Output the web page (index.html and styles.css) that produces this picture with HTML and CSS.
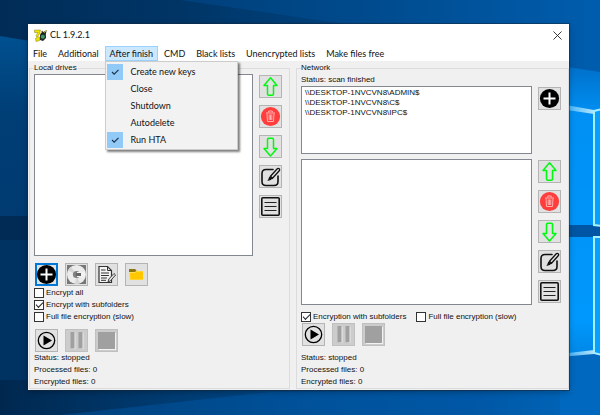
FILE: index.html
```
<!DOCTYPE html>
<html lang="en">
<head>
  <meta charset="UTF-8">
  <title>CL 1.9.2.1</title>
  <link rel="stylesheet" href="styles.css">
</head>
<body>

  <!-- desktop wallpaper -->
  <svg class="wallpaper" viewBox="0 0 600 415" preserveAspectRatio="none" aria-hidden="true">
    <defs>
      <linearGradient id="sky">
        <stop offset="0" stop-color="#012c57"/>
        <stop offset="0.3" stop-color="#003566"/>
        <stop offset="0.6" stop-color="#004480"/>
        <stop offset="1" stop-color="#0062b4"/>
      </linearGradient>
      <linearGradient id="floor">
        <stop offset="0" stop-color="#00284f"/>
        <stop offset="0.5" stop-color="#004a8c"/>
        <stop offset="0.8" stop-color="#0055a0"/>
        <stop offset="1" stop-color="#0070c8"/>
      </linearGradient>
      <linearGradient id="beam" x1="0" y1="0" x2="0" y2="1">
        <stop offset="0" stop-color="#0070ca"/>
        <stop offset="0.15" stop-color="#0090f4"/>
        <stop offset="0.8" stop-color="#0098fc"/>
        <stop offset="1" stop-color="#0078d4"/>
      </linearGradient>
      <linearGradient id="leftGlow" x1="0" y1="0" x2="0" y2="1">
        <stop offset="0" stop-color="#00508f"/>
        <stop offset="0.4" stop-color="#003e76"/>
        <stop offset="1" stop-color="#003a70"/>
      </linearGradient>
      <linearGradient id="streak">
        <stop offset="0" stop-color="#2aaeff"/>
        <stop offset="1" stop-color="#e4fbff"/>
      </linearGradient>
    </defs>
    <rect width="600" height="415" fill="url(#sky)"/>
    <path d="M180 0H600V75L400 32Z" fill="#0056a2" opacity="0.35"/>
    <path d="M0 36L60 46V230H0Z" fill="url(#leftGlow)"/>
    <path d="M0 216H60V240H0Z" fill="#012a55"/>
    <path d="M0 240H60V415H0Z" fill="#003262"/>
    <path d="M0 380H600V415H0Z" fill="url(#floor)"/>
    <path d="M60 415L270 392H600V415Z" fill="#005cae" opacity="0.4"/>
    <path d="M560 66L600 72V372L560 385Z" fill="url(#beam)"/>
    <path d="M560 355L600 353V415H560Z" fill="#0068be"/>
    <path d="M560 225H600V237H560Z" fill="#0056a4"/>
    <path d="M560 104L594 110V114L560 109Z" fill="url(#streak)" opacity="0.8"/>
    <path d="M560 354L594 350V354L560 357Z" fill="url(#streak)" opacity="0.8"/>
    <path d="M594 111L602 109V226L594 225Z" fill="#08a0ff" stroke="#a4f0ff" stroke-width="2"/>
    <path d="M594 237H602V355L594 353Z" fill="#08a0ff" stroke="#a4f0ff" stroke-width="2"/>
  </svg>

  <!-- icon set -->
  <svg class="sprite" aria-hidden="true">
    <symbol id="i-up" viewBox="0 0 21 21">
      <path d="M10.500 1.800L17 9.500H13.500V18Q13.500 19.200 12.300 19.200H8.700Q7.500 19.200 7.500 18V9.500H4Z" fill="none" stroke="#00f910" stroke-width="1.500" stroke-linejoin="round"/>
    </symbol>
    <symbol id="i-down" viewBox="0 0 21 21">
      <path d="M10.500 20L17 12.500H13.500V3.500Q13.500 2.300 12.300 2.300H8.700Q7.500 2.300 7.500 3.500V12.500H4Z" fill="none" stroke="#00f910" stroke-width="1.500" stroke-linejoin="round"/>
    </symbol>
    <symbol id="i-trash" viewBox="0 0 21 21">
      <circle cx="10.500" cy="10.500" r="9.600" fill="#ff3d3d"/>
      <path d="M6 7H15M8.700 6.500V5H12.300V6.500M7 7.500L7.500 15.500H13.500L14 7.500M9.200 8.500V14M10.500 8.500V14M11.800 8.500V14" fill="none" stroke="#ffb0b0" stroke-width="1"/>
    </symbol>
    <symbol id="i-edit" viewBox="0 0 21 21">
      <path d="M13 3.500H6Q2 3.500 2 7.500V15.500Q2 19.500 6 19.500H14Q18 19.500 18 15.500V10" fill="none" stroke="#111" stroke-width="1.600" stroke-linecap="round"/>
      <path d="M10.500 10.300L17 3Q18.200 1.800 19.200 2.800Q20.200 3.800 19 5L12.500 12.200Z" fill="#e1e1e1" stroke="#111" stroke-width="1.300"/>
      <path d="M10.200 10.500L12.500 12.500Q11 15 7.200 14.600Q8.700 13.500 8.700 12Q9 10.700 10.200 10.500Z" fill="#111"/>
    </symbol>
    <symbol id="i-list" viewBox="0 0 21 21">
      <rect x="1.800" y="1.800" width="17.400" height="17.400" rx="1" fill="none" stroke="#111" stroke-width="1.600"/>
      <path d="M4.500 6.500H16.500M4.500 10.500H16.500M4.500 14.500H16.500" stroke="#222" stroke-width="1.100"/>
    </symbol>
    <symbol id="i-add" viewBox="0 0 21 21">
      <circle cx="10.500" cy="10.500" r="9.600" fill="#000"/>
      <path d="M10.500 4.500V16.500M4.500 10.500H16.500" stroke="#fff" stroke-width="2"/>
    </symbol>
    <symbol id="i-disk" viewBox="0 0 21 21">
      <rect x="1" y="1" width="19" height="19" fill="#777"/>
      <circle cx="10.500" cy="10.500" r="9.500" fill="#ececec"/>
      <path d="M10.500 10.500L5 2.800A9.500 9.500 0 0 0 2 6.500ZM10.500 10.500L14 19.300A9.500 9.500 0 0 1 9 19.900Z" fill="#d6d6d6"/>
      <circle cx="10.500" cy="10.500" r="3.600" fill="#808080"/>
      <rect x="11" y="8" width="8" height="5" fill="#f2f2f2"/>
      <rect x="10" y="9" width="5" height="3" fill="#666"/>
    </symbol>
    <symbol id="i-note" viewBox="0 0 21 21">
      <path d="M3 2.500H11.500L15.500 6.500V18.500H3Z" fill="#f4f4f4" stroke="#333" stroke-width="1.200"/>
      <path d="M11.500 2.500V6.500H15.500M5 6H9.500M5 9H13M5 11.500H13M5 14H11M5 16.300H10" fill="none" stroke="#333" stroke-width="1"/>
      <path d="M12 18L12.800 15L18 9.500L19.600 11L14.500 16.800Z" fill="#ddd" stroke="#333" stroke-width="0.900"/>
    </symbol>
    <symbol id="i-folder" viewBox="0 0 21 21">
      <path d="M3 5H9L11 7H17V16H3Z" fill="#ffdf60"/>
      <path d="M3 5H9L10.500 6.500L9 8H3Z" fill="#8a7410"/>
      <path d="M4 9H9L10.500 7.500H17V15.500H4.500Z" fill="#ffc800"/>
    </symbol>
    <symbol id="i-play" viewBox="0 0 21 21">
      <circle cx="10.500" cy="10.500" r="8.200" fill="none" stroke="#000" stroke-width="1.300"/>
      <path d="M7.500 5.500L16 10.500L7.500 15.500Z" fill="#000"/>
    </symbol>
    <symbol id="i-pause" viewBox="0 0 21 21">
      <path d="M5 2.500H9.500V19H5ZM13 2.500H17.500V19H13Z" fill="#e8e8e8"/>
      <path d="M4.500 2H8.500V18.500H4.500ZM12.500 2H16.500V18.500H12.500Z" fill="#a0a0a0"/>
    </symbol>
    <symbol id="i-stop" viewBox="0 0 21 21">
      <rect x="3" y="3" width="17" height="17" fill="#f2f2f2"/>
      <rect x="2" y="2" width="17" height="17" fill="#a0a0a0"/>
    </symbol>
    <symbol id="i-check" viewBox="0 0 16 16">
      <path d="M5 8L7.200 10.200L11.500 5.800" fill="none" stroke="#1b3550" stroke-width="1.200"/>
    </symbol>
  </svg>

  <main class="window">
    <header class="titlebar">
      <svg class="app-icon" viewBox="0 0 13 13" aria-hidden="true">
        <path d="M0.500 1H6.500L5.500 5L3.500 7.500L5.500 8V11.500L2 12.500L1.500 9.500L3 9L2 6.500L4 3.500H0.500Z" fill="#f0e400" stroke="#6b6200" stroke-width="0.400"/>
        <path d="M6 6L8 1.500L9.500 3L12.800 1L11.800 5L12 9L9 12L6 11Z" fill="#1d2620"/>
        <circle cx="8.800" cy="7.800" r="2" fill="#3d9a6a"/>
        <path d="M10 3.800L12.300 1.500M6.500 4.500L8 2.500" stroke="#e6dc20" stroke-width="1"/>
      </svg>
      <span class="title">CL 1.9.2.1</span>
      <button class="close" aria-label="Close window">
        <svg viewBox="0 0 9 9"><path d="M0.500 0.500L8.500 8.500M8.500 0.500L0.500 8.500" stroke="#222" stroke-width="0.900"/></svg>
      </button>
    </header>

    <nav class="menubar">
      <button>File</button>
      <button>Additional</button>
      <div class="menu-item">
        <button class="open" aria-haspopup="true" aria-expanded="true">After finish</button>
        <div class="dropdown" role="menu">
          <button role="menuitemcheckbox" aria-checked="true"><span class="tick on"><svg><use href="#i-check"/></svg></span>Create new keys</button>
          <button role="menuitemcheckbox" aria-checked="false"><span class="tick"></span>Close</button>
          <button role="menuitemcheckbox" aria-checked="false"><span class="tick"></span>Shutdown</button>
          <button role="menuitemcheckbox" aria-checked="false"><span class="tick"></span>Autodelete</button>
          <button role="menuitemcheckbox" aria-checked="true"><span class="tick on"><svg><use href="#i-check"/></svg></span>Run HTA</button>
        </div>
      </div>
      <button>CMD</button>
      <button>Black lists</button>
      <button>Unencrypted lists</button>
      <button>Make files free</button>
    </nav>

    <div class="panels">
      <fieldset class="panel">
        <legend>Local drives</legend>
        <div class="list-row grow">
          <select class="listbox" multiple aria-label="Local drives"></select>
          <div class="side">
            <button class="tool" aria-label="Move up"><svg><use href="#i-up"/></svg></button>
            <button class="tool" aria-label="Delete"><svg><use href="#i-trash"/></svg></button>
            <button class="tool" aria-label="Move down"><svg><use href="#i-down"/></svg></button>
            <button class="tool" aria-label="Edit"><svg><use href="#i-edit"/></svg></button>
            <button class="tool" aria-label="Show list"><svg><use href="#i-list"/></svg></button>
          </div>
        </div>
        <div class="tools add-tools">
          <button class="tool focused" aria-label="Add"><svg><use href="#i-add"/></svg></button>
          <button class="tool" aria-label="Add disk"><svg><use href="#i-disk"/></svg></button>
          <button class="tool" aria-label="Add from text"><svg><use href="#i-note"/></svg></button>
          <button class="tool" aria-label="Add folder"><svg><use href="#i-folder"/></svg></button>
        </div>
        <div class="checks stacked">
          <label><input type="checkbox">Encrypt all</label>
          <label><input type="checkbox" checked>Encrypt with subfolders</label>
          <label><input type="checkbox">Full file encryption (slow)</label>
        </div>
        <div class="tools run-tools">
          <button class="tool" aria-label="Start"><svg><use href="#i-play"/></svg></button>
          <button class="tool" aria-label="Pause" disabled><svg><use href="#i-pause"/></svg></button>
          <button class="tool" aria-label="Stop" disabled><svg><use href="#i-stop"/></svg></button>
        </div>
        <div class="stats">
          <p>Status: stopped</p>
          <p>Processed files: 0</p>
          <p>Encrypted files: 0</p>
        </div>
      </fieldset>

      <fieldset class="panel">
        <legend>Network</legend>
        <p>Status: scan finished</p>
        <div class="list-row shares">
          <select class="listbox" multiple aria-label="Network shares">
            <option>\\DESKTOP-1NVCVN8\ADMIN$</option>
            <option>\\DESKTOP-1NVCVN8\C$</option>
            <option>\\DESKTOP-1NVCVN8\IPC$</option>
          </select>
          <div class="side">
            <button class="tool" aria-label="Add share"><svg><use href="#i-add"/></svg></button>
          </div>
        </div>
        <div class="list-row grow queue">
          <select class="listbox" multiple aria-label="Network queue"></select>
          <div class="side">
            <button class="tool" aria-label="Move up"><svg><use href="#i-up"/></svg></button>
            <button class="tool" aria-label="Delete"><svg><use href="#i-trash"/></svg></button>
            <button class="tool" aria-label="Move down"><svg><use href="#i-down"/></svg></button>
            <button class="tool" aria-label="Edit"><svg><use href="#i-edit"/></svg></button>
            <button class="tool" aria-label="Show list"><svg><use href="#i-list"/></svg></button>
          </div>
        </div>
        <div class="checks">
          <label><input type="checkbox" checked>Encryption with subfolders</label>
          <label><input type="checkbox">Full file encryption (slow)</label>
        </div>
        <div class="tools">
          <button class="tool" aria-label="Start"><svg><use href="#i-play"/></svg></button>
          <button class="tool" aria-label="Pause" disabled><svg><use href="#i-pause"/></svg></button>
          <button class="tool" aria-label="Stop" disabled><svg><use href="#i-stop"/></svg></button>
        </div>
        <div class="stats spaced">
          <p>Status: stopped</p>
          <p>Processed files: 0</p>
          <p>Encrypted files: 0</p>
        </div>
      </fieldset>
    </div>
  </main>

</body>
</html>
```
FILE: styles.css
```
* {
  box-sizing: border-box;
}

body {
  margin: 0;
  min-height: 100vh;
  padding: 24px 31px 25px 28px;
  display: flex;
  background: #003c74;
  font-family: "Liberation Sans", Arial, sans-serif;
  font-size: 8px;
  line-height: 12px;
  color: #111;
}

button, select, input {
  font: inherit;
  color: inherit;
  margin: 0;
}

p {
  margin: 0;
}

.wallpaper {
  position: absolute;
  inset: 0;
  width: 100%;
  height: 100%;
  z-index: -1;
}

.sprite {
  position: absolute;
  width: 0;
  height: 0;
}

/* window frame */
.window {
  flex: 1;
  min-width: 0;
  display: flex;
  flex-direction: column;
  background: #f0f0f0;
  box-shadow: 0 0 0 1px rgba(20, 40, 60, 0.5), 0 2px 6px rgba(0, 0, 0, 0.3);
}

.titlebar {
  display: flex;
  align-items: center;
  gap: 3px;
  height: 22px;
  padding: 0 7px 0 6px;
  background: #fff;
  font-family: Lato, "Open Sans", sans-serif;
  font-size: 9px;
}

.app-icon {
  width: 13px;
  height: 13px;
}

.title {
  flex: 1;
}

.close {
  display: flex;
  padding: 0;
  border: none;
  background: none;
}

.close svg {
  width: 9px;
  height: 9px;
}

/* menu */
.menubar {
  display: flex;
  gap: 1px;
  height: 15px;
  background: #fff;
  font-family: Lato, "Open Sans", sans-serif;
  font-size: 9px;
}

.menubar button {
  height: 15px;
  padding: 0 5px;
  border: none;
  background: none;
  white-space: nowrap;
}

.menu-item {
  position: relative;
}

.menubar .open {
  background: #cce8ff;
  box-shadow: inset 0 0 0 1px #99d1ff;
}

.dropdown {
  position: absolute;
  top: 100%;
  left: 0;
  z-index: 2;
  width: 133px;
  padding: 1px;
  display: flex;
  flex-direction: column;
  background: #f2f2f2;
  border: 1px solid #ccc;
  box-shadow: 2px 2px 2px rgba(0, 0, 0, 0.5);
}

.dropdown button {
  display: flex;
  align-items: center;
  gap: 8px;
  height: 17px;
  padding: 0;
}

.tick {
  width: 16px;
  height: 16px;
}

.tick.on {
  background: #91c9f7;
}

.tick svg {
  display: block;
  width: 16px;
  height: 16px;
}

/* panels */
.panels {
  flex: 1;
  display: grid;
  grid-template-columns: 261fr 273fr;
  gap: 6px;
  padding: 1px 0 1px 1px;
}

.panel {
  display: flex;
  flex-direction: column;
  min-width: 0;
  margin: 0;
  padding: 0 7px 0 4px;
  border: 1px solid #dcdcdc;
}

legend {
  padding: 0 1px 0 0;
}

.list-row {
  display: flex;
  gap: 6px;
}

.grow {
  flex: 1;
}

.shares {
  height: 68px;
}

.queue {
  margin: 5px 0 6px;
}

.listbox {
  flex: 1;
  min-width: 0;
  height: auto;
  padding: 1px;
  overflow: hidden;
  background: #fff;
  border: 1px solid #828790;
  border-radius: 0;
}

.listbox option {
  min-height: 10px;
  padding: 0 2px;
  line-height: 10px;
}

.side {
  display: flex;
  flex-direction: column;
  gap: 7px;
  padding-top: 1px;
}

.tools {
  display: flex;
  gap: 7px;
  padding-left: 1px;
}

.add-tools {
  margin: 7px 0 1px;
}

.run-tools {
  margin-top: 6px;
}

.tool {
  display: block;
  width: 23px;
  height: 23px;
  padding: 0;
  background: #e1e1e1;
  border: 1px solid #b4b4b4;
}

.tool svg {
  display: block;
  width: 21px;
  height: 21px;
}

.tool.focused {
  border-color: #0078d7;
  box-shadow: inset 0 0 0 1px #0078d7;
}

.tool:disabled {
  background: #ccc;
  border-color: #c0c0c0;
}

.checks {
  display: flex;
  gap: 10px;
}

.stacked {
  flex-direction: column;
  gap: 0;
}

.checks label {
  display: flex;
  align-items: center;
  gap: 2px;
  height: 12px;
  white-space: nowrap;
}

.checks input {
  appearance: none;
  display: grid;
  place-items: center;
  width: 10px;
  height: 10px;
  background: #fff;
  border: 1px solid #333;
}

.checks input:checked::before {
  content: "";
  width: 6px;
  height: 3px;
  margin-bottom: 2px;
  border-left: 1px solid #222;
  border-bottom: 1px solid #222;
  transform: rotate(-45deg);
}

.spaced {
  margin-top: 6px;
}
```
